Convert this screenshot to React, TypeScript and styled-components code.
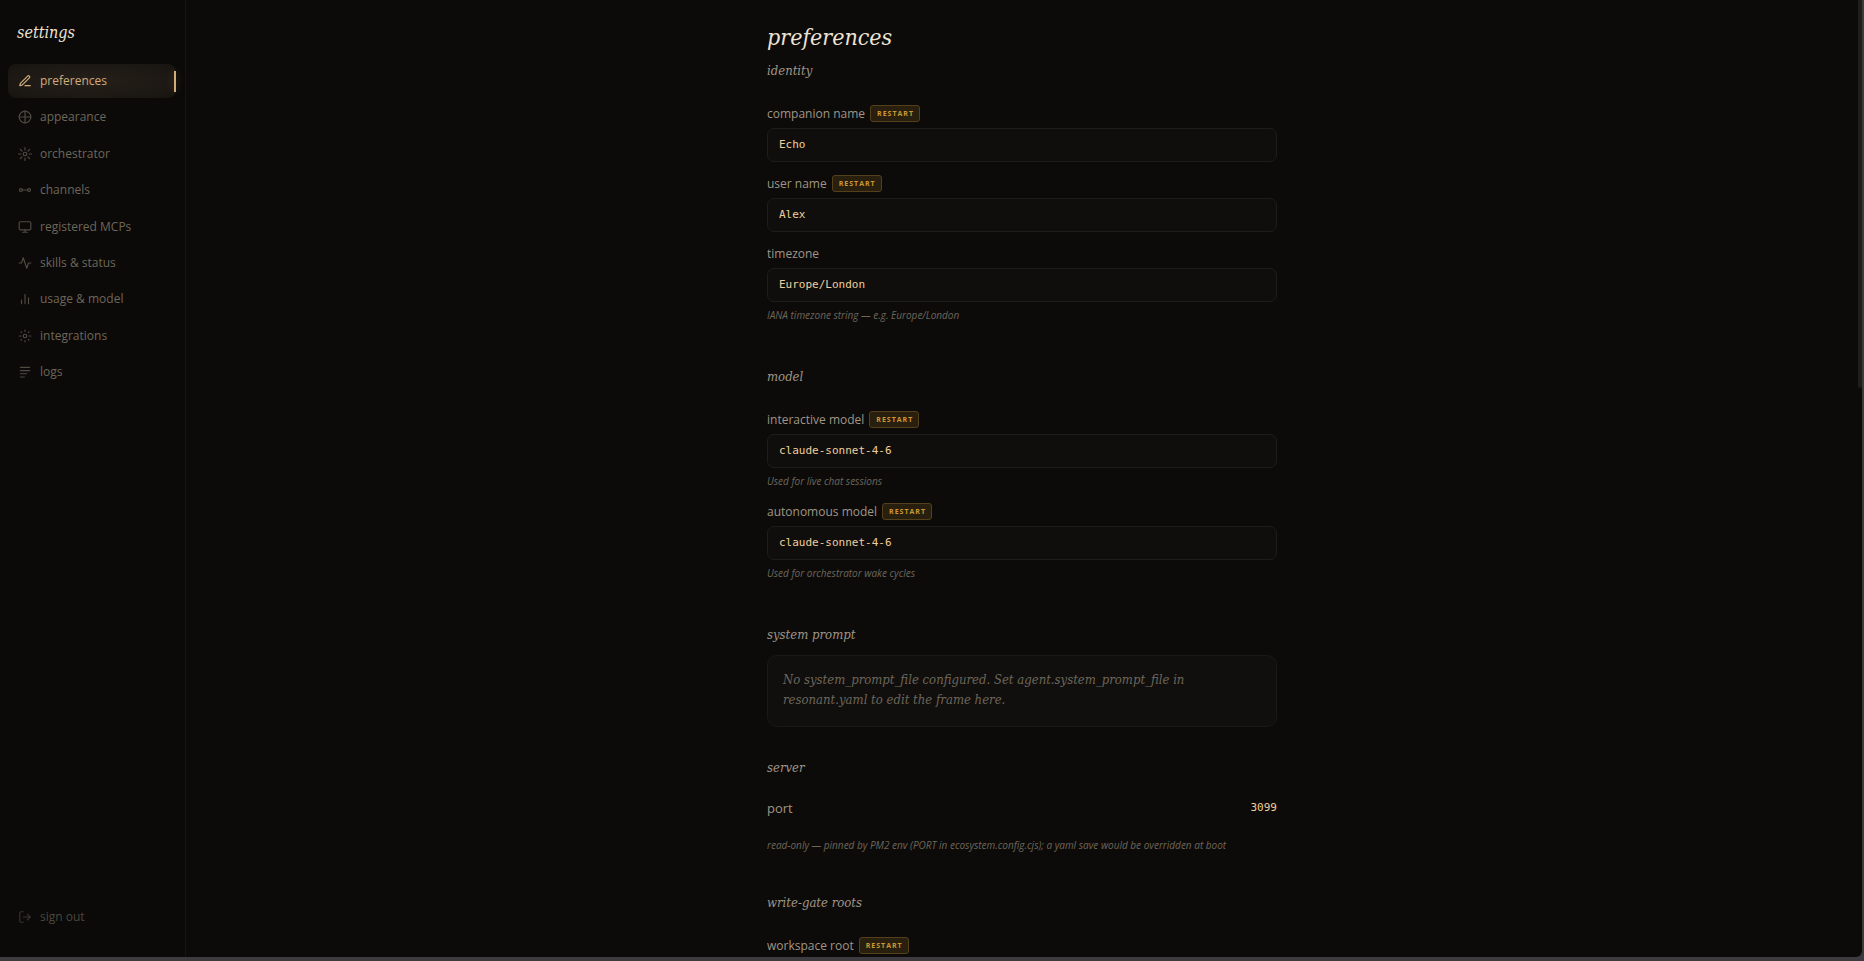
import React, { ReactNode } from 'react';
import styled, { createGlobalStyle, css } from 'styled-components';

const sans = `"Open Sans", "Noto Sans", sans-serif`;
const serif = `"DejaVu Serif Condensed", "DejaVu Serif", serif`;
const mono = `"DejaVu Sans Mono", "Liberation Mono", monospace`;

const color = {
  frame: '#3d3b40',
  page: '#0c0b09',
  sidebar: '#0b0a08',
  line: '#161513',
  fieldLine: '#1e1d1b',
  field: '#0f0e0c',
  bright: '#ede3d4',
  label: '#a09587',
  muted: '#6e665a',
  faint: '#4b463e',
  accent: '#d2ab7c',
  value: '#f0ce9c',
  badge: '#cc9831',
};

const GlobalStyle = createGlobalStyle`
  *, *::before, *::after { box-sizing: border-box; }
  body { margin: 0; background: ${color.frame}; }
  button, input { font: inherit; color: inherit; }
`;

const Frame = styled.div`
  height: 100vh;
  padding: 0 2px 4px 0;
  background: ${color.frame};
  font-family: ${sans};
  font-size: 12px;
  line-height: 16px;
`;

const Shell = styled.div`
  position: relative;
  display: flex;
  height: 100%;
  overflow: hidden;
  background: ${color.page};
  border-bottom-right-radius: 6px;
`;

const Sidebar = styled.aside`
  display: flex;
  flex-direction: column;
  flex: none;
  width: 186px;
  padding: 21px 9px 23px 8px;
  background: ${color.sidebar};
  border-right: 1px solid ${color.line};
`;

const SidebarTitle = styled.h2`
  margin: 0 0 19px;
  padding-left: 9px;
  font-family: ${serif};
  font-size: 16px;
  font-style: italic;
  font-weight: 400;
  line-height: 24px;
  color: ${color.bright};
`;

const NavList = styled.nav`
  display: flex;
  flex-direction: column;
  justify-content: space-between;
  height: 325px;
`;

const navItem = css`
  display: flex;
  align-items: center;
  gap: 8px;
  width: 168px;
  height: 34px;
  padding: 0 10px;
  border: 0;
  border-radius: 8px;
  background: none;
  text-align: left;
  text-decoration: none;
  cursor: pointer;
`;

const NavLink = styled.a<{ $active?: boolean }>`
  ${navItem}
  position: relative;
  color: ${p => (p.$active ? color.accent : color.muted)};
  ${p =>
    p.$active &&
    css`
      background: radial-gradient(ellipse at center, #261f19 0%, #1f1a15 50%, #171410 100%);
      &::after {
        content: '';
        position: absolute;
        top: 7px;
        right: 0;
        width: 2px;
        height: 21px;
        background: ${color.accent};
        box-shadow: 0 0 8px rgba(208, 168, 120, 0.3);
      }
    `}
`;

const SignOut = styled.button`
  ${navItem}
  margin-top: auto;
  color: ${color.faint};
`;

const Glyph = styled.svg<{ $dim?: boolean }>`
  flex: none;
  width: 14px;
  height: 14px;
  fill: none;
  stroke: currentColor;
  stroke-width: 2;
  stroke-linecap: round;
  stroke-linejoin: round;
  opacity: ${p => (p.$dim ? 0.7 : 1)};
`;

const Main = styled.main`
  flex: 1;
  min-width: 0;
  padding: 20px 4px 48px 0;
  overflow-y: auto;
  scrollbar-width: none;
`;

const Column = styled.div`
  max-width: 510px;
  margin: 0 auto;
`;

const ScrollThumb = styled.div`
  position: absolute;
  top: 0;
  right: 0;
  width: 4px;
  height: 388px;
  background: #1f1e1c;
  border-radius: 0 0 2px 2px;
`;

const PageTitle = styled.h1`
  margin: 0 0 7px;
  font-family: ${serif};
  font-size: 23px;
  font-style: italic;
  font-weight: 400;
  line-height: 34px;
  color: ${color.bright};
`;

const Section = styled.section<{ $gap?: number }>`
  margin-bottom: ${p => p.$gap ?? 43}px;
`;

const SectionTitle = styled.h3<{ $gap?: number }>`
  margin: 0 0 ${p => p.$gap ?? 24}px;
  font-family: ${serif};
  font-size: 13px;
  font-style: italic;
  font-weight: 400;
  line-height: 20px;
  color: ${color.label};
`;

const FieldBlock = styled.div`
  & + & {
    margin-top: 13px;
  }
`;

const LabelRow = styled.div`
  display: flex;
  align-items: center;
  gap: 5px;
  height: 17px;
  margin-bottom: 6px;
  color: ${color.label};
`;

const Badge = styled.span`
  padding: 0 5px 0 6px;
  border: 1px solid #54401a;
  border-radius: 3px;
  background: #281f0f;
  font-size: 7px;
  font-weight: 700;
  line-height: 15px;
  letter-spacing: 1px;
  text-transform: uppercase;
  color: ${color.badge};
`;

const TextInput = styled.input`
  display: block;
  width: 100%;
  height: 34px;
  padding: 0 11px 2px;
  border: 1px solid ${color.fieldLine};
  border-radius: 7px;
  background: ${color.field};
  font-family: ${mono};
  font-size: 11px;
  color: ${color.value};
  outline: none;
`;

const Hint = styled.p`
  margin: 0;
  padding: 6px 0 2px;
  font-size: 10px;
  font-style: italic;
  line-height: 14px;
  color: ${color.muted};
`;

const Notice = styled.p`
  margin: 0;
  padding: 14px 15px 16px;
  border: 1px solid #1a1917;
  border-radius: 10px;
  background: #100f0d;
  font-family: ${serif};
  font-size: 13px;
  font-style: italic;
  line-height: 20px;
  color: ${color.muted};
`;

const ReadOnlyRow = styled.div`
  display: flex;
  align-items: center;
  justify-content: space-between;
  height: 20px;
  margin-bottom: 14px;
  font-size: 13px;
  color: ${color.label};
`;

const ReadOnlyValue = styled.output`
  font-family: ${mono};
  font-size: 11px;
  color: ${color.value};
`;

type IconName =
  | 'pen' | 'globe' | 'sun' | 'link' | 'monitor' | 'activity' | 'bars' | 'gear' | 'lines' | 'exit';

const shapes: Record<IconName, ReactNode> = {
  pen: (
    <>
      <path d="M12 20h9" />
      <path d="M16.5 3.5a2.1 2.1 0 0 1 3 3L7 19l-4 1 1-4Z" />
    </>
  ),
  globe: (
    <>
      <circle cx="12" cy="12" r="10" />
      <path d="M2 12h20M12 2v20" />
    </>
  ),
  sun: (
    <>
      <circle cx="12" cy="12" r="3" />
      <path d="M12 1v4M12 19v4M1 12h4M19 12h4M4 4l3 3M17 17l3 3M4 20l3-3M17 7l3-3" />
    </>
  ),
  link: (
    <>
      <circle cx="5" cy="12" r="2.5" />
      <circle cx="19" cy="12" r="2.5" />
      <path d="M7.5 12h9" />
    </>
  ),
  monitor: (
    <>
      <rect x="2" y="3" width="20" height="14" rx="2" />
      <path d="M8 21h8M12 17v4" />
    </>
  ),
  activity: <path d="M22 12h-4l-3 9L9 3l-3 9H2" />,
  bars: <path d="M18 20V10M12 20V4M6 20v-6" />,
  gear: (
    <>
      <circle cx="12" cy="12" r="3" />
      <path d="M12 2v2M12 20v2M2 12h3M19 12h3M5 5l1 1M18 18l1 1M5 19l1-1M18 6l1-1" />
    </>
  ),
  lines: <path d="M4 4h16M4 9.5h16M4 15h11M4 20.5h7" />,
  exit: (
    <>
      <path d="M9 21H5a2 2 0 0 1-2-2V5a2 2 0 0 1 2-2h4" />
      <path d="M16 17l5-5-5-5M21 12H9" />
    </>
  ),
};

const Icon = ({ name, dim }: { name: IconName; dim?: boolean }) => (
  <Glyph viewBox="0 0 24 24" $dim={dim} aria-hidden="true">
    {shapes[name]}
  </Glyph>
);

const navItems: { icon: IconName; label: string }[] = [
  { icon: 'pen', label: 'preferences' },
  { icon: 'globe', label: 'appearance' },
  { icon: 'sun', label: 'orchestrator' },
  { icon: 'link', label: 'channels' },
  { icon: 'monitor', label: 'registered MCPs' },
  { icon: 'activity', label: 'skills & status' },
  { icon: 'bars', label: 'usage & model' },
  { icon: 'gear', label: 'integrations' },
  { icon: 'lines', label: 'logs' },
];

interface FieldProps {
  id: string;
  label: string;
  value: string;
  restart?: boolean;
  hint?: string;
}

const Field = ({ id, label, value, restart, hint }: FieldProps) => (
  <FieldBlock>
    <LabelRow>
      <label htmlFor={id}>{label}</label>
      {restart && <Badge>restart</Badge>}
    </LabelRow>
    <TextInput id={id} type="text" defaultValue={value} spellCheck={false} />
    {hint && <Hint>{hint}</Hint>}
  </FieldBlock>
);

export default function App() {
  return (
    <>
      <GlobalStyle />
      <Frame>
        <Shell>
          <Sidebar>
            <SidebarTitle>settings</SidebarTitle>
            <NavList>
              {navItems.map((item, i) => (
                <NavLink key={item.label} href="#" $active={i === 0}>
                  <Icon name={item.icon} dim={i > 0} />
                  {item.label}
                </NavLink>
              ))}
            </NavList>
            <SignOut type="button">
              <Icon name="exit" dim />
              sign out
            </SignOut>
          </Sidebar>
          <Main>
            <Column>
              <PageTitle>preferences</PageTitle>
              <Section>
                <SectionTitle>identity</SectionTitle>
                <Field id="companion" label="companion name" value="Echo" restart />
                <Field id="user" label="user name" value="Alex" restart />
                <Field
                  id="timezone"
                  label="timezone"
                  value="Europe/London"
                  hint="IANA timezone string — e.g. Europe/London"
                />
              </Section>
              <Section>
                <SectionTitle>model</SectionTitle>
                <Field
                  id="interactive"
                  label="interactive model"
                  value="claude-sonnet-4-6"
                  restart
                  hint="Used for live chat sessions"
                />
                <Field
                  id="autonomous"
                  label="autonomous model"
                  value="claude-sonnet-4-6"
                  restart
                  hint="Used for orchestrator wake cycles"
                />
              </Section>
              <Section $gap={31}>
                <SectionTitle $gap={10}>system prompt</SectionTitle>
                <Notice>
                  No system_prompt_file configured. Set agent.system_prompt_file in resonant.yaml to
                  edit the frame here.
                </Notice>
              </Section>
              <Section $gap={39}>
                <SectionTitle $gap={20}>server</SectionTitle>
                <ReadOnlyRow>
                  <label htmlFor="port">port</label>
                  <ReadOnlyValue id="port">3099</ReadOnlyValue>
                </ReadOnlyRow>
                <Hint>
                  read-only — pinned by PM2 env (PORT in ecosystem.config.cjs); a yaml save would be
                  overridden at boot
                </Hint>
              </Section>
              <Section>
                <SectionTitle>write-gate roots</SectionTitle>
                <Field id="workspace" label="workspace root" value="" restart />
              </Section>
            </Column>
          </Main>
          <ScrollThumb />
        </Shell>
      </Frame>
    </>
  );
}
